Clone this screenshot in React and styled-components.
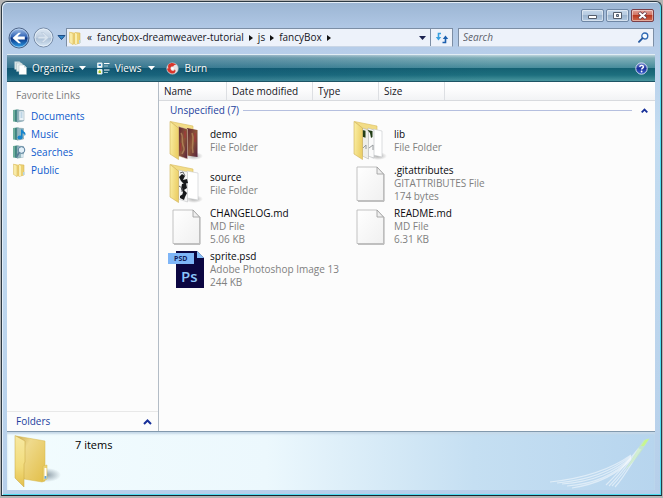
import React from 'react';
import styled, { createGlobalStyle } from 'styled-components';

const GlobalStyle = createGlobalStyle`
  * {
    box-sizing: border-box;
  }

  body {
    background: #b4b4b4;
    margin: 0;
  }

  body,
  button,
  input {
    font-family: 'Open Sans', 'Noto Sans', sans-serif;
    font-size: 10px;
    line-height: 13px;
  }

  button {
    background: none;
    border: 0;
    color: inherit;
    padding: 0;
  }

  svg {
    display: block;
    flex: none;
  }
`;

const Window = styled.div`
  background: linear-gradient(#9bb5d3 0, #b2c9e6 28px, #b9d0eb 60px, #c3dcf1 130px, #b6cfea 100%);
  border: 1px solid #2d3a44;
  border-bottom-color: #16262e;
  border-radius: 6px 6px 0 0;
  box-shadow: inset 1px 1px 0 #e4eef8, inset -1px -1px 0 #4fdcf0;
  display: flex;
  flex-direction: column;
  margin: 1px 1px 2px;
  min-height: calc(100vh - 3px);
  padding: 0 6px 5px 5px;
`;

const TitleBar = styled.header`
  display: flex;
  gap: 2px;
  height: 26px;
  justify-content: flex-end;
  padding: 7px 1px 0 0;
`;

const CaptionButton = styled.button`
  align-items: center;
  background: ${props => (props.$close
    ? 'linear-gradient(#e0a097 0, #d0705f 50%, #b83820 50%, #d06a50 100%)'
    : 'linear-gradient(#c6d8ea 0, #b4c9df 50%, #9cb5cf 50%, #b5cbe2 100%)')};
  border: 1px solid ${props => (props.$close ? '#7b3f48' : '#6f87a5')};
  border-radius: 2px;
  box-shadow: inset 0 0 0 1px rgba(255, 255, 255, 0.45);
  display: flex;
  height: 13px;
  justify-content: center;
  width: 23px;
`;

const NavigationBar = styled.nav`
  align-items: center;
  display: flex;
  height: 19px;
  margin-bottom: 7px;
  padding: 0 1px;
`;

const TravelButtons = styled.div`
  align-items: center;
  display: flex;
  gap: 3px;
  width: 58px;
`;

const AddressBar = styled.div`
  align-items: center;
  background: #edf2fa;
  border: 1px solid #7c8ea5;
  border-bottom-color: #c9d6e6;
  display: flex;
  flex: 1;
  height: 19px;
  margin-right: 5px;
`;

const Crumbs = styled.div`
  align-items: center;
  display: flex;
  flex: 1;
  gap: 5px;
  padding-left: 1px;
`;

const Crumb = styled.button`
  color: #15151d;
  white-space: nowrap;
`;

const RefreshButton = styled.button`
  border-left: 1px solid #7c8ea5;
  display: grid;
  height: 17px;
  margin-left: 4px;
  place-items: center;
  width: 22px;
`;

const SearchBox = styled.label`
  align-items: center;
  background: #edf2fa;
  border: 1px solid #7c8ea5;
  border-bottom-color: #c9d6e6;
  display: flex;
  flex: 0 0 196px;
  height: 19px;
  padding: 0 4px;

  input {
    background: none;
    border: 0;
    flex: 1;
    min-width: 0;
    outline: 0;
    padding: 0;
  }

  input::placeholder {
    color: #5d626b;
    font-style: italic;
    opacity: 1;
  }
`;

const Toolbar = styled.div`
  align-items: center;
  background:
    linear-gradient(90deg, rgba(10, 65, 115, 0.35), rgba(10, 65, 115, 0.2) 40%, rgba(10, 110, 110, 0) 75%),
    linear-gradient(#bed5dc 0, #7faeb8 3px, #468b9b 13px, #146072 13px, #1d6f7e 20px, #49959e 26px);
  border-bottom: 1px solid #1d5465;
  border-top: 1px solid #e1edf5;
  color: #fff;
  display: flex;
  height: 28px;
  padding: 0 7px;
`;

const ToolButton = styled.button`
  align-items: center;
  display: flex;
  gap: 5px;
  margin-left: ${props => (props.$end ? 'auto' : '0')};
  margin-right: ${props => props.$space || 0}px;
  text-shadow: 0 1px 2px #0b3948;
`;

const Content = styled.main`
  background: #fcfcfc;
  display: flex;
  flex: 1;
`;

const Sidebar = styled.aside`
  border-right: 1px solid #b3bcc6;
  display: flex;
  flex: none;
  flex-direction: column;
  width: 152px;

  h2 {
    color: #7d7d7d;
    font-size: 10px;
    font-weight: normal;
    margin: 7px 0 5px 9px;
  }
`;

const LinkList = styled.ul`
  flex: 1;
  list-style: none;
  margin: 0;
  padding: 0 0 0 5px;

  a {
    align-items: center;
    color: #0d5acd;
    display: flex;
    gap: 5px;
    height: 18px;
    text-decoration: none;
  }
`;

const FoldersButton = styled.button`
  align-items: center;
  border-top: 1px solid #e8e8e8;
  color: #1c3f9e;
  display: flex;
  height: 20px;
  justify-content: space-between;
  padding: 0 6px 0 9px;
`;

const FilePane = styled.section`
  flex: 1;
`;

const ColumnHeader = styled.div`
  background: linear-gradient(#fff 0, #fbfbfc 50%, #f2f3f5 100%);
  border-bottom: 1px solid #d8dade;
  display: flex;
  height: 19px;
`;

const Column = styled.button`
  border-right: 1px solid #dddfe3;
  color: #15151d;
  padding-left: 5px;
  text-align: left;
  width: ${props => props.$width}px;
`;

const GroupHeading = styled.div`
  align-items: center;
  color: #1c3f9e;
  display: flex;
  gap: 4px;
  height: 18px;
  padding: 0 7px 0 11px;

  h2 {
    font-size: 10px;
    font-weight: normal;
    margin: 0;
  }

  hr {
    border: 0;
    border-top: 1px solid #b5bfdf;
    flex: 1;
    margin: 0 5px 0 0;
  }
`;

const FileGrid = styled.ul`
  display: grid;
  grid-auto-rows: 43px;
  grid-template-columns: repeat(auto-fill, 184px);
  list-style: none;
  margin: 0;
  padding: 0 0 0 9px;
`;

const File = styled.li`
  align-items: center;
  color: #808080;
  display: flex;
  gap: 4px;
  white-space: nowrap;

  p {
    margin: 0;
  }
`;

const FileName = styled.p`
  color: #08080c;
`;

const DetailsPane = styled.footer`
  background: linear-gradient(90deg, #f2fcfe 0, #ecf8fd 40%, #c5dff2 72%, #b7d5ee 100%);
  border-top: 1px solid #8299ad;
  box-shadow: inset 0 2px 2px #c6d9e8;
  display: flex;
  height: 59px;
  justify-content: space-between;

  p {
    flex: 1;
    font-size: 11px;
    margin: 6px 0 0 14px;
  }
`;

const CaretDown = ({ color = '#fff' }) => (
  <svg width="7" height="4" viewBox="0 0 7 4"><path d="M0 0h7L3.5 4z" fill={color} /></svg>
);

const RecentCaret = () => (
  <svg width="9" height="7" viewBox="0 0 9 7">
    <path d="M1 1.500h7L4.500 5.500z" fill="#2f86c8" stroke="#1d4d86" />
  </svg>
);

const CrumbArrow = () => (
  <svg width="4" height="6" viewBox="0 0 4 6"><path d="M0 0l4 3-4 3z" fill="#111" /></svg>
);

const ChevronUp = () => (
  <svg width="9" height="6" viewBox="0 0 9 6">
    <path d="M1 5l3.500-3.500L8 5" fill="none" stroke="#162f99" strokeWidth="2" />
  </svg>
);

const ChevronUpSmall = () => (
  <svg width="7" height="5" viewBox="0 0 7 5">
    <path d="M.7 4.300l2.800-2.800 2.800 2.800" fill="none" stroke="#162f99" strokeWidth="1.800" />
  </svg>
);

const BackIcon = () => (
  <svg width="22" height="22" viewBox="0 0 22 22">
    <defs>
      <linearGradient id="back" x2="0" y2="1">
        <stop offset="0" stopColor="#a8c4ea" />
        <stop offset=".45" stopColor="#2f62b5" />
        <stop offset=".5" stopColor="#0a2f80" />
        <stop offset="1" stopColor="#2fa5ee" />
      </linearGradient>
    </defs>
    <circle cx="11" cy="11" r="10" fill="url(#back)" stroke="#4c6285" />
    <circle cx="11" cy="11" r="9" fill="none" stroke="#c5dcf4" strokeOpacity=".6" />
    <path d="M4.500 11l6-5.200h2.600L9.500 9.600h7.300v2.800H9.500l3.600 3.800h-2.600z" fill="#fff" />
  </svg>
);

const ForwardIcon = () => (
  <svg width="21" height="21" viewBox="0 0 21 21">
    <defs>
      <linearGradient id="forward" x2="0" y2="1">
        <stop offset="0" stopColor="#dce7f3" />
        <stop offset=".5" stopColor="#c0d0e2" />
        <stop offset=".52" stopColor="#a9bed5" />
        <stop offset="1" stopColor="#d9e8f6" />
      </linearGradient>
    </defs>
    <circle cx="10.500" cy="10.500" r="9.500" fill="url(#forward)" stroke="#7489a5" />
    <circle cx="10.500" cy="10.500" r="8.500" fill="none" stroke="#eaf2fa" strokeOpacity=".8" />
    <path d="M16 10.500l-5.500-5H8.200l3.400 3.700H5v2.600h6.600l-3.400 3.700h2.300z" fill="#d8e3ee" stroke="#b4c5d8" strokeWidth=".6" />
  </svg>
);

const SmallFolder = () => (
  <svg width="14" height="14" viewBox="0 0 14 14">
    <path d="M2 1l6 1v11l-4 .5z" fill="#eed278" />
    <path d="M7 1.500L12 2v10l-5 1.500z" fill="#ecd173" stroke="#d0ae4b" strokeWidth=".5" />
    <path d="M7 1.500l2 1.500v10l-2 .5z" fill="#f9eeb0" />
    <path d="M1.500 1L5 2.500v11L1.500 11.500z" fill="#f9eba6" stroke="#d5b658" strokeWidth=".5" />
    <path d="M11 9h1.500v3H11z" fill="#b7d7e8" />
  </svg>
);

const RefreshIcon = () => (
  <svg width="14" height="12" viewBox="0 0 14 12">
    <path d="M6 1.500H3.500V6" fill="none" stroke="#38a0df" strokeWidth="1.600" />
    <path d="M.8 5h5.400L3.500 8.500z" fill="#38a0df" />
    <path d="M7.500 10.500h3V6" fill="none" stroke="#1a5eae" strokeWidth="1.600" />
    <path d="M7.800 7h5.400l-2.700-3.500z" fill="#1a5eae" />
  </svg>
);

const SearchIcon = () => (
  <svg width="11" height="11" viewBox="0 0 11 11">
    <circle cx="6.800" cy="4" r="3" fill="#f6fbff" stroke="#2f69b4" strokeWidth="1.300" />
    <path d="M4.600 6.200L1 9.800" stroke="#25589f" strokeWidth="1.900" strokeLinecap="round" />
  </svg>
);

const OrganizeIcon = () => (
  <svg width="13" height="14" viewBox="0 0 13 14">
    <path d="M.5.500h5l1 1v7h-6z" fill="#d5e2e4" />
    <path d="M2.500 2h5l1.500 1.500v7H2.500z" fill="#e6eeee" stroke="#9bb2b6" strokeWidth=".4" />
    <path d="M5 4h5l2.500 2.500v7H5z" fill="#fff" stroke="#9bb2b6" strokeWidth=".4" />
    <path d="M10 4v2.500h2.500z" fill="#c9d8d9" />
  </svg>
);

const ViewsIcon = () => (
  <svg width="13" height="13" viewBox="0 0 13 13">
    <path d="M.5 1h4.500v4.500H.5zM.5 7.500h4.500V12H.5z" fill="#fff" stroke="#d8e9ea" />
    <path d="M1.500 2h2.500v2H1.500z" fill="#458ac2" />
    <path d="M1.500 9l1.500-1 1 1.500v1.500H1.500z" fill="#a7c420" />
    <path d="M7 1.500h5.500M7 8h5.500" stroke="#fff" />
    <path d="M7 4h4M7 10.500h4" stroke="#9fc4cb" />
  </svg>
);

const BurnIcon = () => (
  <svg width="13" height="13" viewBox="0 0 13 13">
    <circle cx="6.500" cy="6.500" r="5.800" fill="#e6e3e4" stroke="#a9b4bb" strokeWidth=".6" />
    <path d="M2.500 2.500C5 .2 8.500.5 10.200 3 8.700 2.700 7.500 3.200 7.200 4.600 5.800 4 4.600 4.700 4.500 6.200c0 1.500 1 2.600 2.500 2.600 1 0 1.700-.6 1.800-1.500 1.300 1.300.8 3.300-.9 4C4.500 12.300 1 9.500 1 6c.6.8 1 .8 1.400.3C1.900 5 1.900 3.700 2.500 2.500z" fill="#d8352b" />
    <circle cx="6.500" cy="6.500" r="1.200" fill="#fff" />
  </svg>
);

const HelpIcon = () => (
  <svg width="13" height="13" viewBox="0 0 13 13">
    <defs>
      <linearGradient id="help" x2="0" y2="1">
        <stop offset="0" stopColor="#8094d8" />
        <stop offset=".5" stopColor="#1a309c" />
        <stop offset="1" stopColor="#3a63d0" />
      </linearGradient>
    </defs>
    <circle cx="6.500" cy="6.500" r="5.700" fill="url(#help)" stroke="#cfdbee" />
    <path d="M4.800 5c0-2.200 3.600-2.200 3.600 0 0 1.200-1.800 1.200-1.800 2.500" fill="none" stroke="#fff" strokeWidth="1.400" />
    <circle cx="6.600" cy="9.500" r=".9" fill="#fff" />
  </svg>
);

const BookIcon = ({ kind }) => (
  <svg width="14" height="14" viewBox="0 0 14 14">
    <path d="M1 1l4-.5V13L1 12.500z" fill="#6fae9c" />
    <path d="M3 1l3.500-.5V13L3 12.500z" fill="#3f8580" />
    <path d="M5 1l6.500.5V12L5 13.200z" fill="#93b6bf" stroke="#6c929e" strokeWidth=".5" />
    {kind === 'documents' && (
      <g>
        <path d="M7 2h5v9.500H7z" fill="#eaf3f8" stroke="#8aa2af" strokeWidth=".5" />
        <path d="M8.500 4h2M8.500 6h2M8.500 8h2" stroke="#79a6c6" strokeWidth=".8" />
      </g>
    )}
    {kind === 'music' && (
      <g fill="#1684cc">
        <ellipse cx="8" cy="10.500" rx="2.500" ry="2" />
        <path d="M9 10.500V2.500h1.500c.2 2 3 2.200 3 4.500 0 1-.5 1.500-1 2 .2-1.500-.5-2.500-2-2.700v4.200z" />
      </g>
    )}
    {kind === 'searches' && (
      <g>
        <circle cx="9.500" cy="5" r="3.300" fill="#e3f0f8" stroke="#5a7f9d" />
        <path d="M7.200 7.500L4.500 12" stroke="#597d97" strokeWidth="1.700" />
        <path d="M9 9l3 .3V12l-3 .5z" fill="#d6e6ee" />
      </g>
    )}
  </svg>
);

const FolderIcon = ({ kind }) => (
  <svg width="38" height="42" viewBox="0 0 38 42">
    <defs>
      <linearGradient id="flap" x2="1" y2=".3">
        <stop offset="0" stopColor="#fbf0a8" />
        <stop offset="1" stopColor="#ecd068" />
      </linearGradient>
      <linearGradient id="photo" x2="1" y2="1">
        <stop offset="0" stopColor="#5d2534" />
        <stop offset=".5" stopColor="#8e5538" />
        <stop offset="1" stopColor="#54203b" />
      </linearGradient>
      <radialGradient id="shade">
        <stop offset="0" stopColor="#777" stopOpacity=".6" />
        <stop offset="1" stopColor="#777" stopOpacity="0" />
      </radialGradient>
    </defs>
    <ellipse cx="26" cy="36" rx="9" ry="4" fill="url(#shade)" />
    <path d="M2.500 1.500L25 6v6l-14-3z" fill="#f2dc86" stroke="#d9bc5f" strokeWidth=".6" />
    {kind === 'demo' && (
      <g>
        <path d="M19 8l10.500 2v27L19 35.500z" fill="url(#photo)" />
        <path d="M10.500 6.500L19.500 9v30l-9-3z" fill="url(#photo)" stroke="#e7d7bd" strokeWidth=".5" />
        <path d="M13 13c3 4 0 7 2 12s1 5-1 9M24 13c3 7-1 10 1 20" fill="none" stroke="#be9762" strokeWidth="1.500" opacity=".65" />
        <path d="M17 11v7M27 13v9M12.500 23v8" stroke="#a82c3c" strokeWidth="1.500" opacity=".6" />
      </g>
    )}
    {kind === 'source' && (
      <g>
        <path d="M19 8l11 2v27l-11-2z" fill="#fff" stroke="#c8cbcc" strokeWidth=".6" />
        <path d="M10.500 7l9 2v30l-9-3z" fill="#f4f4f4" stroke="#b8babc" strokeWidth=".5" />
        <path d="M11 14l3-3 3 2-2 4 4-1 1 4-4 1-3-3zM14 21l4-1 1 5-3 2 3 3-2 4-3-1 1-4-2-3zM12 33l3-2 2 3-1 3-4-2z" fill="#17191b" />
        <path d="M12 10l3-1 2 4M11 23l3 2v4" fill="none" stroke="#626568" />
      </g>
    )}
    {kind === 'lib' && (
      <g>
        <path d="M21 9l9 2v26l-9-2z" fill="#fff" stroke="#c4c7c9" strokeWidth=".6" />
        <path d="M16 8l6 2v28l-6-2z" fill="#fafafa" stroke="#aeb1b4" strokeWidth=".5" />
        <path d="M10.500 8l6 2v29l-6-3z" fill="#eeeee9" stroke="#aaa" strokeWidth=".5" />
        <path d="M10.500 10l3 .8v7l-3-1zM15.500 10l5 1v6l-1.500 1-1-5z" fill="#223d16" />
        <path d="M11 28l3-3v4M17 28l4-3v5" fill="none" stroke="#969a9d" />
      </g>
    )}
    <path d="M2 1.500L10.500 8v31.500L2 34z" fill="url(#flap)" stroke="#ceb055" strokeWidth=".6" />
  </svg>
);

const DocumentIcon = () => (
  <svg width="38" height="42" viewBox="0 0 38 42">
    <defs>
      <linearGradient id="paper" x2="1" y2="1">
        <stop offset="0" stopColor="#fff" />
        <stop offset="1" stopColor="#f0f0f0" />
      </linearGradient>
    </defs>
    <path d="M6 38.200h26V11" fill="none" stroke="#a5a5a5" />
    <path d="M5 4h20l6.500 7v26.500H5z" fill="url(#paper)" stroke="#b4b4b4" strokeWidth=".8" />
    <path d="M25 4v7h6.500z" fill="#efefef" stroke="#9b9b9b" strokeWidth=".8" />
  </svg>
);

const PsdIcon = () => (
  <svg width="38" height="42" viewBox="0 0 38 42" fontFamily="'Open Sans', sans-serif">
    <path d="M8 2h21l7 7v30H8z" fill="#0b0641" />
    <path d="M29 2v7h7z" fill="#85bdf8" />
    <path d="M0 4h26v11H0z" fill="#7eb5f7" />
    <text x="6" y="12" fontSize="7" fontWeight="700" fill="#13215c">PSD</text>
    <text x="13" y="33" fontSize="15" fontWeight="600" fill="#8cc5fa">Ps</text>
  </svg>
);

const LargeFolder = () => (
  <svg width="54" height="58" viewBox="0 0 54 58">
    <defs>
      <linearGradient id="big-front" x2="1" y2="1">
        <stop offset="0" stopColor="#c9a94e" />
        <stop offset=".3" stopColor="#efda8c" />
        <stop offset="1" stopColor="#e2be48" />
      </linearGradient>
      <linearGradient id="big-flap" x2="0" y2="1">
        <stop offset="0" stopColor="#f7e9a2" />
        <stop offset=".6" stopColor="#f2dc7c" />
        <stop offset="1" stopColor="#e3c04d" />
      </linearGradient>
      <radialGradient id="big-shade">
        <stop offset="0" stopColor="#697b88" stopOpacity=".7" />
        <stop offset="1" stopColor="#697b88" stopOpacity="0" />
      </radialGradient>
    </defs>
    <ellipse cx="40" cy="43" rx="14" ry="7" fill="url(#big-shade)" />
    <path d="M9 4l29 5v40l-3 1-18-3z" fill="url(#big-front)" stroke="#d6b84f" strokeWidth=".5" />
    <path d="M36 34l4-1v14l-4 2z" fill="#ecd377" stroke="#d6b84f" strokeWidth=".5" />
    <path d="M37.500 36h2v10.500l-2 .5z" fill="#fff" />
    <path d="M37.500 44h2v2.500l-2 .5z" fill="#64a6dc" />
    <path d="M8 3.500L18 9v21l-1 2v23L8 46z" fill="url(#big-flap)" stroke="#c7a542" strokeWidth=".5" />
  </svg>
);

const Swoosh = () => (
  <svg width="108" height="58" viewBox="0 0 108 58">
    <g fill="none" stroke="#fff" strokeOpacity=".5" strokeWidth="1.200">
      <path d="M3 50C40 46 66 36 84 23" />
      <path d="M10 51C44 48 68 37 84 24" />
      <path d="M15 52C46 50 70 39 84 25" />
      <path d="M20 54C48 52 70 41 84 26" />
      <path d="M25 56C50 52 71 42 84 27" />
      <path d="M59 53C72 41 82 28 92 16" />
      <path d="M62 54C74 42 82 30 92 17" />
      <path d="M65 54C76 43 84 30 93 17" />
      <path d="M68 55C78 44 85 30 94 17" />
    </g>
    <path d="M78 38C86 26 91 15 97 8l6-2c-6 9-13 22-25 32z" fill="#c9efb9" opacity=".6" />
    <path d="M94 14l4-6 4-1-5 7z" fill="#c7f68e" />
  </svg>
);

const links = [
  { name: 'Documents', icon: <BookIcon kind="documents" /> },
  { name: 'Music', icon: <BookIcon kind="music" /> },
  { name: 'Searches', icon: <BookIcon kind="searches" /> },
  { name: 'Public', icon: <SmallFolder /> },
];

const columns = [
  { name: 'Name', width: 68 },
  { name: 'Date modified', width: 86 },
  { name: 'Type', width: 66 },
  { name: 'Size', width: 66 },
];

const files = [
  { name: 'demo', type: 'File Folder', icon: <FolderIcon kind="demo" /> },
  { name: 'lib', type: 'File Folder', icon: <FolderIcon kind="lib" /> },
  { name: 'source', type: 'File Folder', icon: <FolderIcon kind="source" /> },
  { name: '.gitattributes', type: 'GITATTRIBUTES File', size: '174 bytes', icon: <DocumentIcon /> },
  { name: 'CHANGELOG.md', type: 'MD File', size: '5.06 KB', icon: <DocumentIcon /> },
  { name: 'README.md', type: 'MD File', size: '6.31 KB', icon: <DocumentIcon /> },
  { name: 'sprite.psd', type: 'Adobe Photoshop Image 13', size: '244 KB', icon: <PsdIcon /> },
];

export default function App() {
  return (
    <>
      <GlobalStyle />
      <Window>
        <TitleBar>
          <CaptionButton aria-label="Minimize">
            <svg width="9" height="7" viewBox="0 0 9 7">
              <path d="M.5 3.500h8v3h-8z" fill="#fff" stroke="#555e6c" />
            </svg>
          </CaptionButton>
          <CaptionButton aria-label="Maximize">
            <svg width="9" height="7" viewBox="0 0 9 7">
              <path d="M.5.5h8v6h-8z" fill="#fff" stroke="#555e6c" />
              <path d="M3.500 2.500h2v2h-2z" fill="#a4bad2" stroke="#555e6c" />
            </svg>
          </CaptionButton>
          <CaptionButton aria-label="Close" $close>
            <svg width="11" height="9" viewBox="0 0 11 9">
              <path d="M2 1.500l7 6M9 1.500l-7 6" stroke="#5e3440" strokeWidth="3.600" />
              <path d="M2.300 1.700l6.400 5.600M8.700 1.700L2.300 7.300" stroke="#fff" strokeWidth="2" />
            </svg>
          </CaptionButton>
        </TitleBar>

        <NavigationBar>
          <TravelButtons>
            <button aria-label="Back"><BackIcon /></button>
            <button aria-label="Forward"><ForwardIcon /></button>
            <button aria-label="Recent pages"><RecentCaret /></button>
          </TravelButtons>
          <AddressBar>
            <Crumbs>
              <SmallFolder />
              <Crumb>«</Crumb>
              <Crumb>fancybox-dreamweaver-tutorial</Crumb>
              <CrumbArrow />
              <Crumb>js</Crumb>
              <CrumbArrow />
              <Crumb>fancyBox</Crumb>
              <CrumbArrow />
            </Crumbs>
            <button aria-label="Previous locations"><CaretDown color="#1c2350" /></button>
            <RefreshButton aria-label="Refresh"><RefreshIcon /></RefreshButton>
          </AddressBar>
          <SearchBox>
            <input type="text" aria-label="Search" placeholder="Search" />
            <SearchIcon />
          </SearchBox>
        </NavigationBar>

        <Toolbar>
          <ToolButton $space={11}>
            <OrganizeIcon />
            Organize
            <CaretDown />
          </ToolButton>
          <ToolButton $space={7}>
            <ViewsIcon />
            Views
          </ToolButton>
          <ToolButton $space={11} aria-label="More views"><CaretDown /></ToolButton>
          <ToolButton>
            <BurnIcon />
            Burn
          </ToolButton>
          <ToolButton aria-label="Help" $end><HelpIcon /></ToolButton>
        </Toolbar>

        <Content>
          <Sidebar>
            <h2>Favorite Links</h2>
            <LinkList>
              {links.map(link => (
                <li key={link.name}>
                  <a href={`#${link.name}`}>
                    {link.icon}
                    {link.name}
                  </a>
                </li>
              ))}
            </LinkList>
            <FoldersButton>
              Folders
              <ChevronUp />
            </FoldersButton>
          </Sidebar>

          <FilePane>
            <ColumnHeader>
              {columns.map(column => (
                <Column key={column.name} $width={column.width}>{column.name}</Column>
              ))}
            </ColumnHeader>
            <GroupHeading>
              <h2>Unspecified (7)</h2>
              <hr />
              <button aria-label="Collapse group"><ChevronUpSmall /></button>
            </GroupHeading>
            <FileGrid>
              {files.map(file => (
                <File key={file.name}>
                  {file.icon}
                  <div>
                    <FileName>{file.name}</FileName>
                    <p>{file.type}</p>
                    {file.size && <p>{file.size}</p>}
                  </div>
                </File>
              ))}
            </FileGrid>
          </FilePane>
        </Content>

        <DetailsPane>
          <LargeFolder />
          <p>7 items</p>
          <Swoosh />
        </DetailsPane>
      </Window>
    </>
  );
}
